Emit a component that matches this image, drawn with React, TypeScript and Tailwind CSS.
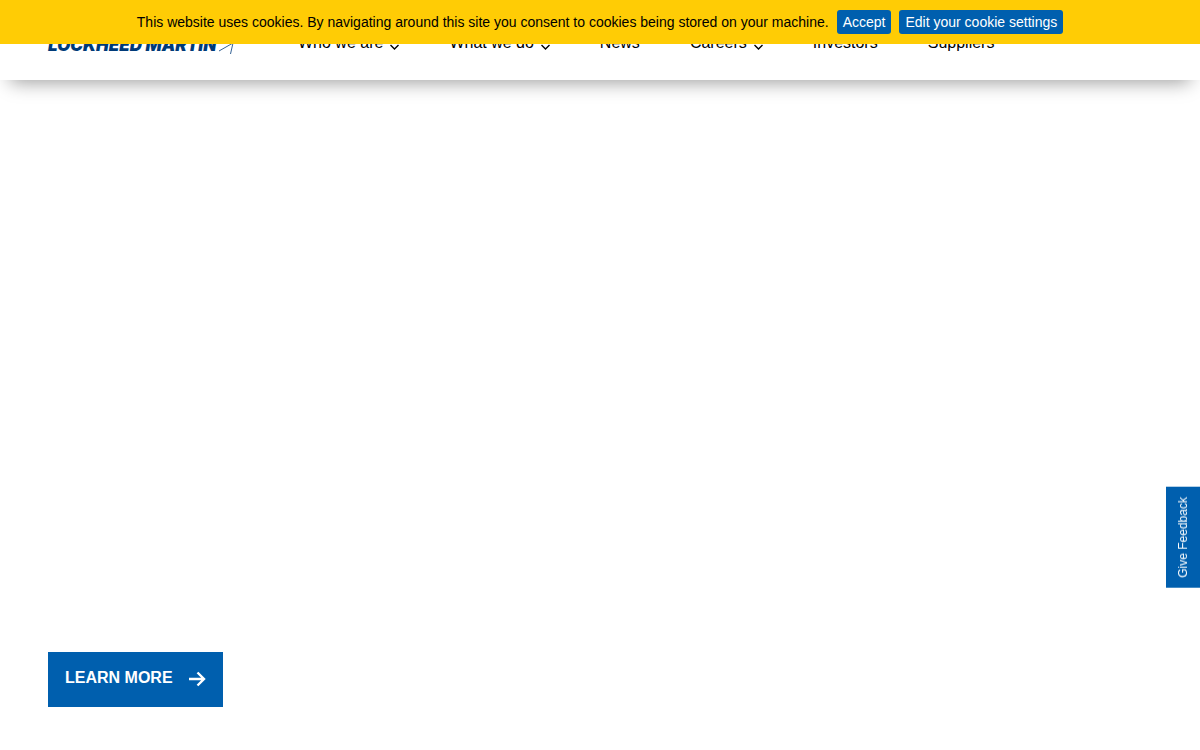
const links = [
  { label: 'Who we are', menu: true },
  { label: 'What we do', menu: true },
  { label: 'News', menu: false },
  { label: 'Careers', menu: true },
  { label: 'Investors', menu: false },
  { label: 'Suppliers', menu: false },
]

function Chevron() {
  return (
    <svg className="mt-2 h-3 w-[11px]" viewBox="0 0 11 12" fill="none" stroke="currentColor" strokeWidth="1.4" aria-hidden="true">
      <path d="M2.500 4l4 4 4-4" />
    </svg>
  )
}

function CookieBar() {
  return (
    <div className="fixed inset-x-0 top-0 z-20 flex items-center justify-center gap-2 bg-[#ffcc05] py-2.5 text-sm leading-6 text-black">
      <p>This website uses cookies. By navigating around this site you consent to cookies being stored on your machine.</p>
      <button type="button" className="rounded-[3px] bg-[#005fae] px-1.5 text-white">Accept</button>
      <button type="button" className="rounded-[3px] bg-[#005fae] px-1.5 text-white">Edit your cookie settings</button>
    </div>
  )
}

function Logo() {
  return (
    <a href="#" aria-label="Lockheed Martin" className="flex w-[186px] items-center justify-between text-[#003a78]">
      <span className="font-[Inter,sans-serif] text-[17px] leading-6 font-black whitespace-nowrap italic">LOCKHEED MARTIN</span>
      {/* Star mark, reduced to its thin outline strokes */}
      <svg className="h-6 w-4 shrink-0" viewBox="0 0 16 24" fill="none" stroke="currentColor" strokeWidth="0.8" aria-hidden="true">
        <path d="M1 18L15 10L12.500 21" />
        <path d="M5 4L15 10" />
      </svg>
    </a>
  )
}

export default function App() {
  return (
    <div className="flex min-h-screen flex-col bg-white font-['Liberation_Sans',Arial,sans-serif] text-base text-black">
      <CookieBar />

      <header className="relative z-10 flex h-20 items-center gap-16 bg-white px-12 shadow-[0_12px_18px_-10px_rgba(0,0,0,0.4)]">
        <div className="pt-2.5">
          <Logo />
        </div>
        <nav className="flex items-center gap-[50px] pt-1.5">
          {links.map((link) => (
            <a key={link.label} href="#" className="flex items-center gap-[5px] whitespace-nowrap">
              {link.label}
              {link.menu && <Chevron />}
            </a>
          ))}
        </nav>
      </header>

      <main className="flex flex-1 flex-col items-start justify-end px-12 pb-[43px]">
        <a href="#" className="flex h-[55px] items-center gap-4 bg-[#005fae] px-[17px] font-bold text-white">
          <span className="pb-1">LEARN MORE</span>
          <svg className="mb-0.5 h-4 w-[17px]" viewBox="0 0 17 16" fill="none" stroke="currentColor" strokeWidth="2.4" aria-hidden="true">
            <path d="M0 8h15M8.500 1.500L15 8l-6.500 6.500" />
          </svg>
        </a>
      </main>

      <button
        type="button"
        className="fixed top-[487px] right-0 z-10 w-[34px] rotate-180 bg-[#005fae] px-2.5 text-xs leading-[34px] text-white [writing-mode:vertical-rl]"
      >
        Give Feedback
      </button>
    </div>
  )
}
